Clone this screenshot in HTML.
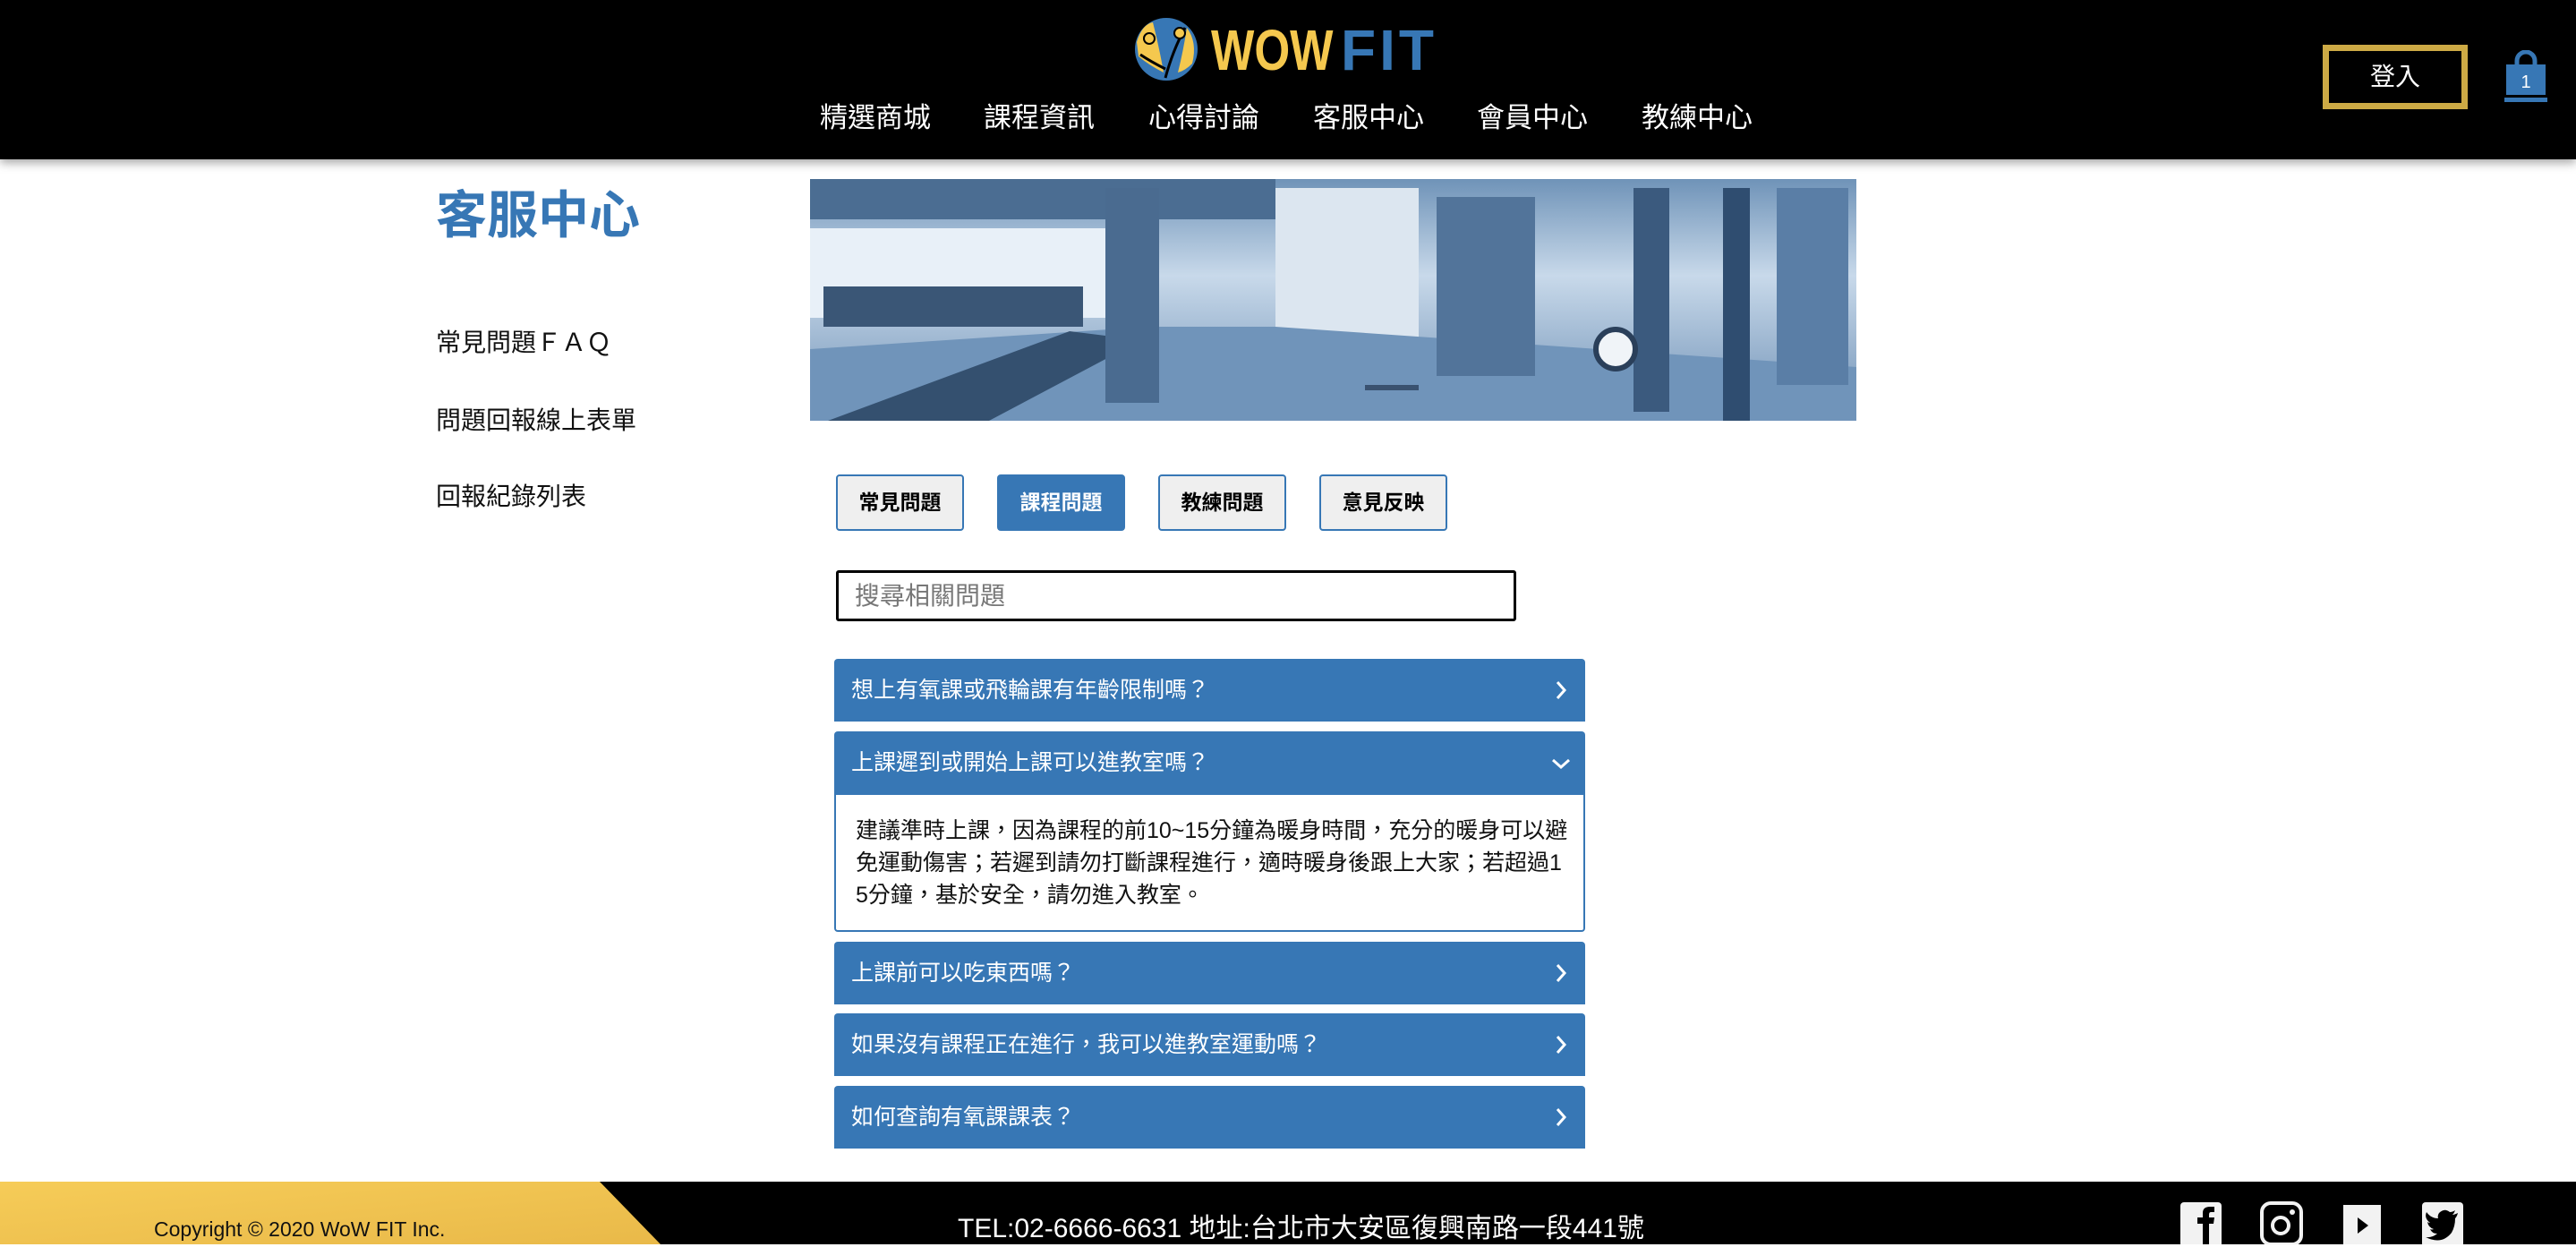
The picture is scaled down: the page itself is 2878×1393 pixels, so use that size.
<!DOCTYPE html>
<html><head><meta charset="utf-8">
<style>
*{margin:0;padding:0;box-sizing:border-box}
body{width:2878px;height:1390px;position:relative;overflow:hidden;background:#fff;font-family:"Liberation Sans","Noto Sans CJK TC",sans-serif}
.a{position:absolute}
.hdr{left:0;top:0;width:2878px;height:178px;background:#000;box-shadow:0 4px 10px rgba(0,0,0,.35);z-index:2}
.nav{top:110px;font-size:31px;color:#fff;line-height:44px;white-space:nowrap}
.side{left:487px;font-size:28px;color:#111;line-height:40px;white-space:nowrap}
.tab{top:530px;width:143px;height:63px;border:2px solid #3777B5;border-radius:4px;background:#efefef;font-size:23px;font-weight:bold;text-align:center;line-height:59px;color:#000;white-space:nowrap}
.q{left:932px;width:839px;height:70px;background:#3777B5;border-radius:4px 4px 0 0;color:#fff;font-size:25px;line-height:70px;padding-left:19px;white-space:nowrap}
.q svg{position:absolute;right:20px;top:24px}
</style></head><body>
<div class="a hdr">
  <svg class="a" style="left:1266px;top:17px" width="74" height="76" viewBox="0 0 74 76">
    <circle cx="37" cy="38" r="35" fill="#3777B5"/>
    <path d="M4 30 Q10 10 22 8 Q30 40 34 64 Q18 56 6 46 Z" fill="#F5C84E"/>
    <path d="M60 14 Q72 30 66 54 Q58 62 50 64 Q56 40 60 14 Z" fill="#F5C84E"/>
    <path d="M36 70 Q44 40 58 14" stroke="#000" stroke-width="3" fill="none"/>
    <path d="M8 44 Q20 52 36 60" stroke="#000" stroke-width="3" fill="none"/>
    <circle cx="18" cy="26" r="6" fill="#F5C84E" stroke="#000" stroke-width="2"/>
    <circle cx="52" cy="20" r="6" fill="#F5C84E" stroke="#000" stroke-width="2"/>
  </svg>
  <div class="a" style="left:1353px;top:18px;font-size:64px;font-weight:bold;line-height:76px;color:#F5C84E;transform:scaleX(.8);transform-origin:left">WOW</div>
  <div class="a" style="left:1498px;top:18px;font-size:64px;font-weight:bold;line-height:76px;color:#3777B5;letter-spacing:4px">FIT</div>
  <div class="a nav" style="left:916px">精選商城</div>
  <div class="a nav" style="left:1099px">課程資訊</div>
  <div class="a nav" style="left:1283px">心得討論</div>
  <div class="a nav" style="left:1467px">客服中心</div>
  <div class="a nav" style="left:1650px">會員中心</div>
  <div class="a nav" style="left:1834px">教練中心</div>
  <div class="a" style="left:2595px;top:50px;width:162px;height:72px;border:7px solid #CDAA45;color:#fff;font-size:28px;text-align:center;line-height:58px">登入</div>
  <svg class="a" style="left:2798px;top:56px" width="48" height="60" viewBox="0 0 48 60">
    <path d="M14 16 V12 A10 10 0 0 1 34 12 V16" stroke="#3777B5" stroke-width="5" fill="none"/>
    <path d="M2 16 H46 V50 H2 Z" fill="#3777B5"/>
    <rect x="0" y="53" width="48" height="5" fill="#3777B5"/>
    <text x="24" y="42" font-size="20" fill="#fff" text-anchor="middle" font-family="Liberation Sans">1</text>
  </svg>
</div>

<div class="a" style="left:487px;top:206px;font-size:57px;color:#3777B5;font-weight:bold;line-height:70px">客服中心</div>
<div class="a side" style="top:363px">常見問題ＦＡＱ</div>
<div class="a side" style="top:450px">問題回報線上表單</div>
<div class="a side" style="top:535px">回報紀錄列表</div>

<svg class="a" style="left:905px;top:200px" width="1169" height="270" viewBox="0 0 1169 270">
  <defs><linearGradient id="g" x1="0" y1="0" x2="0" y2="1"><stop offset="0" stop-color="#6f93b8"/><stop offset=".4" stop-color="#c8d9ea"/><stop offset="1" stop-color="#6e90b5"/></linearGradient></defs>
  <rect width="1169" height="270" fill="url(#g)"/>
  <rect x="0" y="0" width="520" height="45" fill="#4b6d92"/>
  <rect x="0" y="55" width="330" height="100" fill="#e8f0f8"/>
  <rect x="520" y="10" width="160" height="170" fill="#dce6f0"/>
  <path d="M0 270 L0 190 L380 165 L520 165 L1169 210 L1169 270 Z" fill="#7094ba"/>
  <rect x="15" y="120" width="290" height="45" fill="#3a5676"/>
  <path d="M20 270 L290 170 L370 180 L200 270 Z" fill="#34506f"/>
  <rect x="330" y="10" width="60" height="240" fill="#4a6b90"/>
  <rect x="700" y="20" width="110" height="200" fill="#52749a"/>
  <rect x="920" y="10" width="40" height="250" fill="#3b5a7e"/>
  <rect x="1020" y="10" width="30" height="260" fill="#2f4d70"/>
  <rect x="1080" y="10" width="80" height="220" fill="#5a7ea6"/>
  <rect x="620" y="230" width="60" height="6" fill="#3a5270"/>
  <circle cx="900" cy="190" r="22" fill="#f0f4f8" stroke="#2a3f5a" stroke-width="6"/>
</svg>

<div class="a tab" style="left:934px">常見問題</div>
<div class="a tab" style="left:1114px;background:#3777B5;color:#fff">課程問題</div>
<div class="a tab" style="left:1294px">教練問題</div>
<div class="a tab" style="left:1474px">意見反映</div>

<div class="a" style="left:934px;top:637px;width:760px;height:57px;border:3px solid #000;border-radius:3px;font-size:28px;color:#777;line-height:51px;padding-left:18px">搜尋相關問題</div>

<div class="a q" style="top:736px">想上有氧課或飛輪課有年齡限制嗎？<svg width="14" height="22" viewBox="0 0 14 22"><path d="M3 2 L11 11 L3 20" stroke="#fff" stroke-width="3" fill="none"/></svg></div>
<div class="a q" style="top:817px;height:71px">上課遲到或開始上課可以進教室嗎？<svg width="22" height="14" viewBox="0 0 22 14" style="top:29px;right:16px"><path d="M2 3 L11 11 L20 3" stroke="#fff" stroke-width="3" fill="none"/></svg></div>
<div class="a" style="left:932px;top:888px;width:839px;height:153px;border:2px solid #3777B5;border-top:none;border-radius:0 0 4px 4px;font-size:25px;line-height:36px;color:#111;padding:22px 0 0 22px;white-space:nowrap">建議準時上課，因為課程的前10~15分鐘為暖身時間，充分的暖身可以避<br>免運動傷害；若遲到請勿打斷課程進行，適時暖身後跟上大家；若超過1<br>5分鐘，基於安全，請勿進入教室。</div>
<div class="a q" style="top:1052px">上課前可以吃東西嗎？<svg width="14" height="22" viewBox="0 0 14 22"><path d="M3 2 L11 11 L3 20" stroke="#fff" stroke-width="3" fill="none"/></svg></div>
<div class="a q" style="top:1132px">如果沒有課程正在進行，我可以進教室運動嗎？<svg width="14" height="22" viewBox="0 0 14 22"><path d="M3 2 L11 11 L3 20" stroke="#fff" stroke-width="3" fill="none"/></svg></div>
<div class="a q" style="top:1213px">如何查詢有氧課課表？<svg width="14" height="22" viewBox="0 0 14 22"><path d="M3 2 L11 11 L3 20" stroke="#fff" stroke-width="3" fill="none"/></svg></div>

<div class="a" style="left:0;top:1320px;width:2878px;height:70px;background:#000"></div>
<svg class="a" style="left:0;top:1320px" width="740" height="70"><defs><linearGradient id="y" x1="0" y1="0" x2="1" y2="1"><stop offset="0" stop-color="#F6CC58"/><stop offset="1" stop-color="#E9B949"/></linearGradient></defs><path d="M0 0 H670 L738 70 H0 Z" fill="url(#y)"/></svg>
<div class="a" style="left:172px;top:1358px;font-size:23px;color:#111;line-height:30px">Copyright © 2020 WoW FIT Inc.</div>
<div class="a" style="left:1070px;top:1353px;font-size:30px;color:#fff;line-height:40px;white-space:nowrap">TEL:02-6666-6631 地址:台北市大安區復興南路一段441號</div>
<svg class="a" style="left:2436px;top:1343px" width="46" height="47" viewBox="0 0 46 47"><rect width="46" height="50" rx="4" fill="#f2f2f2"/><path d="M25 47 V24 H19 V17 H25 V12 Q25 5 33 5 H38 V11 H34 Q32 11 32 14 V17 H38 L37 24 H32 V47 Z" fill="#000"/></svg>
<svg class="a" style="left:2525px;top:1342px" width="48" height="48" viewBox="0 0 48 48"><rect x="2" y="2" width="44" height="46" rx="10" fill="none" stroke="#f2f2f2" stroke-width="4"/><circle cx="23" cy="27" r="9" fill="none" stroke="#f2f2f2" stroke-width="4"/><circle cx="36" cy="12" r="3" fill="#f2f2f2"/></svg>
<svg class="a" style="left:2618px;top:1346px" width="42" height="44" viewBox="0 0 42 44"><rect width="42" height="46" fill="#f2f2f2"/><path d="M16 14 L28 23 L16 32 Z" fill="#000"/></svg>
<svg class="a" style="left:2706px;top:1343px" width="46" height="47" viewBox="0 0 46 47"><rect width="46" height="50" rx="4" fill="#f2f2f2"/><path d="M40 12 Q36 14 34 14 Q36 12 37 9 Q34 11 31 11 Q25 6 19 12 Q17 15 18 18 Q10 18 5 11 Q2 18 9 23 Q7 23 6 22 Q7 28 13 30 Q11 31 9 30 Q11 35 17 35 Q11 40 4 39 Q22 48 33 34 Q37 27 37 18 Q39 16 40 12 Z" fill="#000"/></svg>
</body></html>
